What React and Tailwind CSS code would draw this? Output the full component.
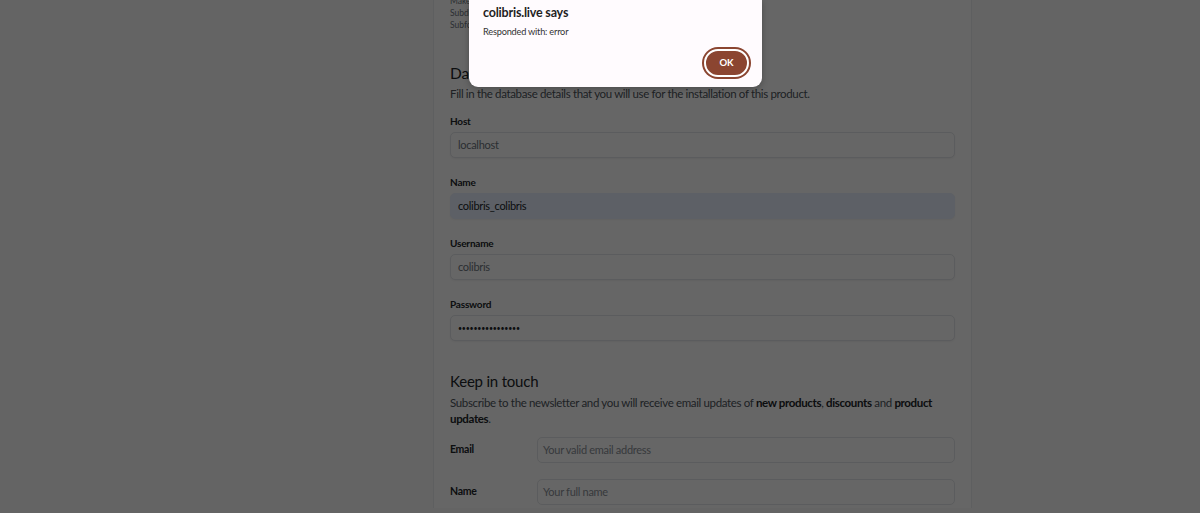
import React from "react";

const Field = ({ label, value, filled, muted, dots }) => (
  <div className="flex flex-col">
    <label className="text-[10px] tracking-[-0.2px] font-bold text-[#212529] leading-[14px] h-[14px] mb-[4px]">{label}</label>
    <div
      className={`h-[26px] rounded-[5px] border shadow-[0_1px_2px_rgba(0,0,0,0.05)] px-[7px] flex items-center ${
        filled ? "bg-[#e8f0fe] border-[#e8f0fe]" : "bg-white border-[#e3e6ea]"
      } ${muted ? "text-[#6c757d]" : "text-[#212529]"} ${dots ? "text-[7px] tracking-[-0.2px]" : "text-[11px] tracking-[-0.3px]"}`}
    >
      {value}
    </div>
  </div>
);

const Row = ({ label, placeholder }) => (
  <div className="flex items-center">
    <span className="w-[87px] text-[10.5px] tracking-[-0.3px] font-bold text-[#212529]">{label}</span>
    <div className="flex-1 h-[26px] rounded-[5px] border border-[#e3e6ea] bg-white px-[5px] flex items-center text-[11px] tracking-[-0.3px] text-[#8a9097]">
      {placeholder}
    </div>
  </div>
);

export default function App() {
  return (
    <div className="relative h-[513px] overflow-hidden bg-[#f9fafb] font-['Lato','Noto_Sans',sans-serif]">
      <div className="ml-[433px] w-[539px] h-full bg-white border-x border-[#eceef0] px-[16px]">
        <div className="-mt-[5px] text-[8.5px] leading-[12px] text-[#6c757d] flex flex-col">
          <span>Make sure your server meets the requirements</span>
          <span>Subdomain installation supported</span>
          <span>Subfolder installation supported</span>
        </div>

        <h2 className="mt-[32px] text-[15.5px] tracking-[-0.2px] leading-[20px] text-[#212529]">Database</h2>
        <p className="mt-[3px] text-[11.5px] tracking-[-0.35px] leading-[16px] text-[#4d545b]">
          Fill in the database details that you will use for the installation of this product.
        </p>

        <div className="mt-[12px] flex flex-col gap-[17px]">
          <Field label="Host" value="localhost" muted />
          <Field label="Name" value="colibris_colibris" filled />
          <Field label="Username" value="colibris" muted />
          <Field label="Password" value="••••••••••••••••" dots />
        </div>

        <h2 className="mt-[30px] text-[15px] tracking-[-0.2px] leading-[20px] text-[#212529]">Keep in touch</h2>
        <p className="mt-[4px] text-[11.5px] tracking-[-0.35px] leading-[16px] text-[#4d545b]">
          Subscribe to the newsletter and you will receive email updates of{" "}
          <b className="text-[#212529]">new products</b>, <b className="text-[#212529]">discounts</b> and{" "}
          <b className="text-[#212529]">product updates</b>.
        </p>

        <div className="mt-[10px] flex flex-col gap-[16px]">
          <Row label="Email" placeholder="Your valid email address" />
          <Row label="Name" placeholder="Your full name" />
        </div>
      </div>

      <div className="absolute inset-0 bg-black/60" />

      <div className="absolute left-[469px] top-0 w-[293px] h-[87px] rounded-b-[9px] bg-[#fffbfe] shadow-[0_2px_6px_rgba(0,0,0,0.25)] px-[14px] pt-[4px]">
        <div className="text-[12.5px] tracking-[-0.2px] font-bold leading-[18px] text-[#1f1f1f]">colibris.live says</div>
        <div className="mt-[3px] text-[9.2px] tracking-[-0.2px] leading-[14px] text-[#333]">Responded with: error</div>
        <div className="flex justify-end mt-[10px] -mr-[1px]">
          <button className="w-[45px] h-[28px] rounded-full bg-[#8b4531] text-white text-[9.5px] font-bold border-2 border-white ring-2 ring-[#8b4531]">
            OK
          </button>
        </div>
      </div>
    </div>
  );
}
